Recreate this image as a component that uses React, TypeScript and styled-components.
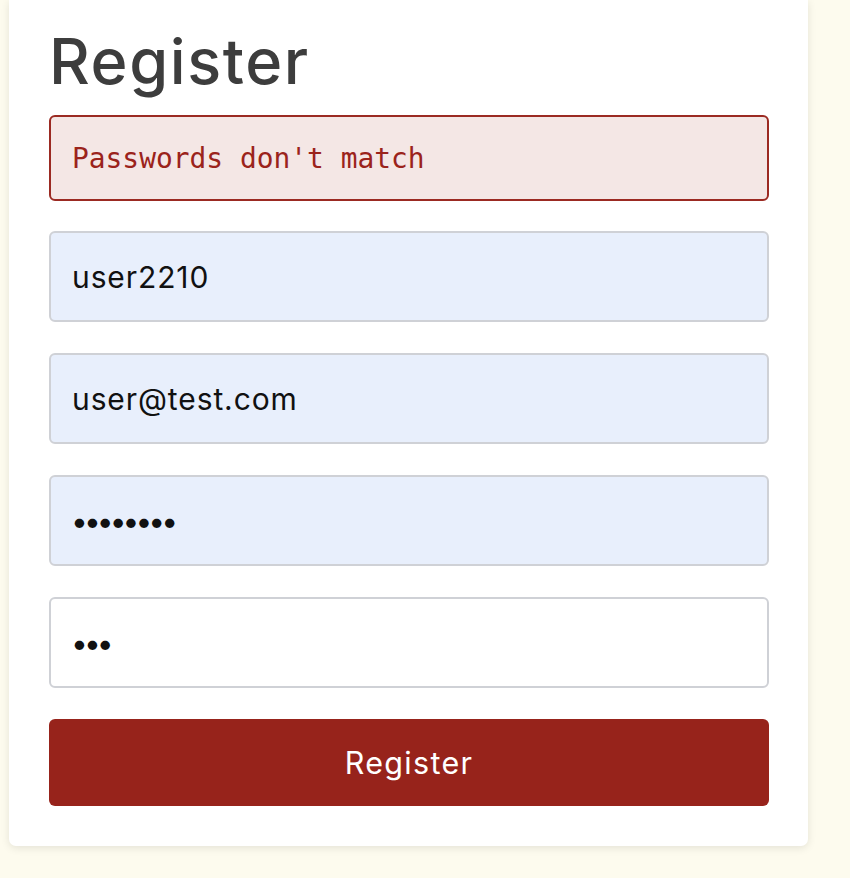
import React from 'react'
import styled, { createGlobalStyle } from 'styled-components'

const GlobalStyle = createGlobalStyle`
  html, body {
    margin: 0;
    padding: 0;
    background: #fdfbee;
  }
  body {
    font-family: Inter, 'Open Sans', sans-serif;
  }
`

const Page = styled.div`
  padding: 0 42px 0 9px;
  min-height: 878px;
  box-sizing: border-box;
`

const Card = styled.div`
  width: 799px;
  box-sizing: border-box;
  background: #ffffff;
  border-radius: 0 0 7px 7px;
  box-shadow: 0 2px 8px rgba(0, 0, 0, 0.1);
  padding: 22px 39px 40px 40px;
  display: flex;
  flex-direction: column;
`

const Title = styled.h1`
  margin: 0 0 15px;
  font-family: Inter, sans-serif;
  font-weight: 500;
  font-size: 63px;
  line-height: 78px;
  color: #3d3d3d;
  letter-spacing: 1.6px;
`

const ErrorBox = styled.div`
  height: 86px;
  box-sizing: border-box;
  border: 2px solid #9b2a22;
  border-radius: 6px;
  background: #f4e7e5;
  color: #9b231b;
  font-family: 'DejaVu Sans Mono', monospace;
  font-size: 27.9px;
  display: flex;
  align-items: center;
  padding: 0 21px;
  margin-bottom: 30px;
`

const Form = styled.form`
  display: flex;
  flex-direction: column;
  gap: 31px;
`

const Field = styled.input<{ $filled?: boolean }>`
  height: 91px;
  box-sizing: border-box;
  border: 2px solid #cfd1d6;
  border-radius: 6px;
  background: ${(p) => (p.$filled ? '#e8effc' : '#ffffff')};
  padding: 0 21px;
  font-family: Inter, sans-serif;
  font-size: 30px;
  letter-spacing: 0.9px;
  color: #111111;
  outline: none;
  width: 100%;

  &[type='password'] {
    letter-spacing: -4px;
    padding-left: 20px;
  }
`

const SubmitButton = styled.button`
  height: 87px;
  border: none;
  border-radius: 6px;
  background: #97231b;
  color: #ffffff;
  font-family: Inter, sans-serif;
  font-size: 30.5px;
  letter-spacing: 1.3px;
  cursor: pointer;
`

const App: React.FC = () => {
  return (
    <>
      <GlobalStyle />
      <Page>
        <Card>
          <Title>Register</Title>
          <ErrorBox>Passwords don't match</ErrorBox>
          <Form onSubmit={(e) => e.preventDefault()}>
            <Field $filled type="text" defaultValue="user2210" />
            <Field $filled type="email" defaultValue="user@test.com" />
            <Field $filled type="password" defaultValue="12345678" />
            <Field type="password" defaultValue="123" />
            <SubmitButton type="submit">Register</SubmitButton>
          </Form>
        </Card>
      </Page>
    </>
  )
}

export default App
